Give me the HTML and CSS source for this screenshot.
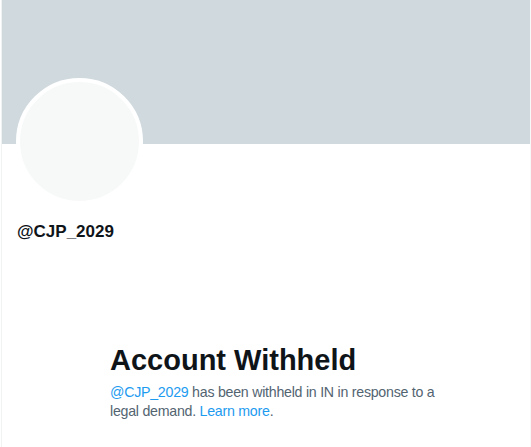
FILE: index.html
```html
<!DOCTYPE html>
<html lang="en">
<head>
<meta charset="utf-8">
<title>@CJP_2029</title>
<link rel="stylesheet" href="styles.css">
</head>
<body>
<main class="column">
  <header class="header">
    <div class="banner"></div>
    <div class="avatar"></div>
  </header>
  <section class="profile">
    <div class="handle">@CJP_2029</div>
  </section>
  <section class="empty">
    <h1 class="empty-title">Account Withheld</h1>
    <p class="empty-text"><a class="link" href="#">@CJP_2029</a> has been withheld in IN in response to a legal demand. <a class="link" href="#">Learn more</a>.</p>
  </section>
</main>
</body>
</html>
```
FILE: styles.css
```css
html, body {
  margin: 0;
  padding: 0;
  background: #ffffff;
}
body {
  font-family: "Liberation Sans", Arial, sans-serif;
  color: #0f1419;
}
.column {
  margin-left: 1px;
  width: 528px;
  min-height: 447px;
  border-left: 1px solid #eff3f4;
  border-right: 1px solid #f7f9f9;
}
.header {
  position: relative;
}
.banner {
  height: 144px;
  background: #cfd9de;
}
.avatar {
  position: absolute;
  left: 14px;
  top: 78px;
  width: 119px;
  height: 119px;
  border: 4px solid #ffffff;
  border-radius: 50%;
  background: #f7f9f9;
}
.profile {
  padding: 78px 16px 0 15px;
}
.handle {
  font-size: 17px;
  line-height: 20px;
  font-weight: 700;
  color: #0f1419;
}
.empty {
  margin: 100px 0 0 108px;
  width: 330px;
}
.empty-title {
  margin: 0;
  font-size: 29px;
  line-height: 36px;
  font-weight: 700;
  color: #0f1419;
}
.empty-text {
  margin: 5px 0 0;
  font-size: 14.2px;
  line-height: 19px;
  letter-spacing: -0.25px;
  color: #536471;
}
.link {
  color: #1d9bf0;
  text-decoration: none;
}
```
